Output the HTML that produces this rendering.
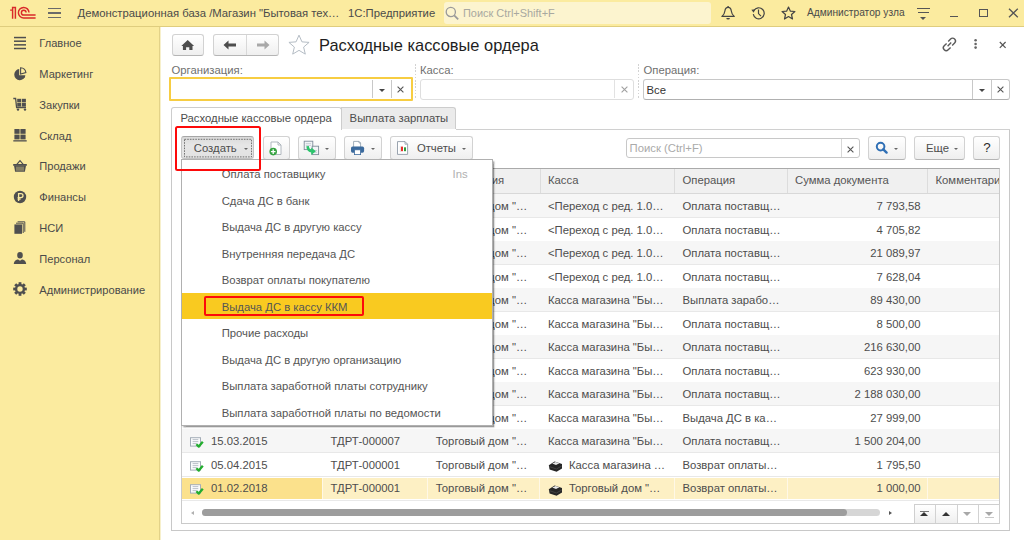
<!DOCTYPE html>
<html><head><meta charset="utf-8"><style>
*{margin:0;padding:0;box-sizing:border-box}
html,body{width:1024px;height:540px;overflow:hidden;background:#fff;font-family:"Liberation Sans",sans-serif;font-size:11.3px;color:#4d4d4d}
.a{position:absolute}
.t{position:absolute;white-space:nowrap;line-height:14px;font-size:11.3px}
svg{position:absolute;overflow:visible}
.btn{position:absolute;border:1px solid #d2d2d2;border-bottom-color:#b5b5b5;border-radius:3px;background:linear-gradient(#ffffff,#efefef)}
.fld{position:absolute;border:1px solid #d8d8d8;border-radius:3px;background:#fff}
.vl{position:absolute;width:1px}
.hl{position:absolute;height:1px}
</style></head><body>
<div class="a" style="left:0px;top:0px;width:1024px;height:26px;background:#fbeb9f"></div>
<div class="a" style="left:0px;top:26px;width:1024px;height:1px;background:#dfcd7e"></div>
<div class="a" style="left:0px;top:27px;width:159px;height:513px;background:#fbeb9f"></div>
<div class="a" style="left:159px;top:27px;width:1px;height:513px;background:#e3d288"></div>
<div class="a" style="left:160px;top:27px;width:1px;height:513px;background:#f7f0cc"></div>
<div class="t" style="left:39.3px;top:35.95px;font-size:11.1px;color:#4a4a4a;">Главное</div>
<div class="t" style="left:39.3px;top:66.82px;font-size:11.1px;color:#4a4a4a;">Маркетинг</div>
<div class="t" style="left:39.3px;top:97.69px;font-size:11.1px;color:#4a4a4a;">Закупки</div>
<div class="t" style="left:39.3px;top:128.56px;font-size:11.1px;color:#4a4a4a;">Склад</div>
<div class="t" style="left:39.3px;top:159.43px;font-size:11.1px;color:#4a4a4a;">Продажи</div>
<div class="t" style="left:39.3px;top:190.30px;font-size:11.1px;color:#4a4a4a;">Финансы</div>
<div class="t" style="left:39.3px;top:221.17px;font-size:11.1px;color:#4a4a4a;">НСИ</div>
<div class="t" style="left:39.3px;top:252.04px;font-size:11.1px;color:#4a4a4a;">Персонал</div>
<div class="t" style="left:39.3px;top:282.91px;font-size:11.1px;color:#4a4a4a;">Администрирование</div>
<svg style="left:13px;top:35.75px" width="14" height="14" viewBox="0 0 14 14"><rect x="1" y="0.8" width="12" height="1.5" fill="#4f4f4f"/><rect x="1" y="4.45" width="12" height="1.5" fill="#4f4f4f"/><rect x="1" y="8.1" width="12" height="1.5" fill="#4f4f4f"/><rect x="1" y="11.75" width="12" height="1.5" fill="#4f4f4f"/></svg>
<svg style="left:13px;top:66.55px" width="14" height="14" viewBox="0 0 14 14"><path d="M6.2 2 A5.6 5.6 0 1 0 12.4 8.3 H6.2 Z" fill="#4f4f4f"/><path d="M7.6 0.8 A5.6 5.6 0 0 1 12.9 5.6 L7.6 7 Z" fill="none" stroke="#4f4f4f" stroke-width="1.1"/><path d="M7.5 9 L12.2 9.2 A5.4 5.4 0 0 1 10.6 11.6 Z" fill="#4f4f4f"/></svg>
<svg style="left:13px;top:97.35px" width="14" height="14" viewBox="0 0 14 14"><path d="M0.3 1.5 H2.6 L3.6 10.5 H13" fill="none" stroke="#4f4f4f" stroke-width="1.3"/><rect x="4.2" y="1.8" width="4" height="3.6" fill="#4f4f4f"/><rect x="8.9" y="1.8" width="4" height="3.6" fill="#4f4f4f"/><rect x="4.2" y="6" width="4" height="3.6" fill="#4f4f4f"/><rect x="8.9" y="6" width="4" height="3.6" fill="#4f4f4f"/><circle cx="5" cy="12.6" r="1.2" fill="#4f4f4f"/><circle cx="12" cy="12.6" r="1.2" fill="#4f4f4f"/></svg>
<svg style="left:13px;top:128.15px" width="14" height="14" viewBox="0 0 14 14"><rect x="1.4" y="1" width="5.2" height="4.8" fill="#4f4f4f"/><rect x="7.4" y="1" width="5.2" height="4.8" fill="#4f4f4f"/><rect x="1.4" y="6.6" width="5.2" height="4.8" fill="#4f4f4f"/><rect x="7.4" y="6.6" width="5.2" height="4.8" fill="#4f4f4f"/><rect x="0.3" y="12.2" width="13.4" height="1.3" fill="#4f4f4f"/></svg>
<svg style="left:13px;top:158.95px" width="14" height="14" viewBox="0 0 14 14"><path d="M3.6 5.6 L7 1.6 L10.4 5.6" fill="none" stroke="#4f4f4f" stroke-width="1.2"/><path d="M0.2 5 H13.8 V6.8 H0.2 Z" fill="#4f4f4f"/><path d="M1 6.6 H13 L11.9 12.8 H2.1 Z" fill="#4f4f4f"/><path d="M4 7.6 V11.8 M6 7.6 V11.8 M8 7.6 V11.8 M10 7.6 V11.8" stroke="#c8bc80" stroke-width="0.9"/></svg>
<svg style="left:13px;top:189.75px" width="14" height="14" viewBox="0 0 14 14"><circle cx="7" cy="7" r="6.2" fill="#4f4f4f"/><path d="M5.6 11 V3.6 H8 A2 2 0 0 1 8 7.6 H4.6 M4.6 9.2 H7.6" fill="none" stroke="#fbeb9f" stroke-width="1.3"/></svg>
<svg style="left:13px;top:220.55px" width="14" height="14" viewBox="0 0 14 14"><rect x="1.4" y="3.4" width="7.6" height="9.4" fill="#4f4f4f"/><path d="M10.2 12 V2.2 H3" fill="none" stroke="#4f4f4f" stroke-width="1"/><path d="M11.8 10.8 V0.8 H4.6" fill="none" stroke="#4f4f4f" stroke-width="1"/></svg>
<svg style="left:13px;top:251.35000000000002px" width="14" height="14" viewBox="0 0 14 14"><path d="M4.2 4.2 A2.8 3.2 0 1 1 9.8 4.2 A2.8 3.2 0 1 1 4.2 4.2 Z" fill="#4f4f4f"/><path d="M0.8 13 C1 9.6 3.2 8.6 5.2 8.4 L7 9.8 L8.8 8.4 C10.8 8.6 13 9.6 13.2 13 Z" fill="#4f4f4f"/></svg>
<svg style="left:13px;top:282.15px" width="14" height="14" viewBox="0 0 14 14"><rect x="5.6" y="0.2" width="2.8" height="3" fill="#4f4f4f" transform="rotate(0 7 7)"/><rect x="5.6" y="0.2" width="2.8" height="3" fill="#4f4f4f" transform="rotate(45 7 7)"/><rect x="5.6" y="0.2" width="2.8" height="3" fill="#4f4f4f" transform="rotate(90 7 7)"/><rect x="5.6" y="0.2" width="2.8" height="3" fill="#4f4f4f" transform="rotate(135 7 7)"/><rect x="5.6" y="0.2" width="2.8" height="3" fill="#4f4f4f" transform="rotate(180 7 7)"/><rect x="5.6" y="0.2" width="2.8" height="3" fill="#4f4f4f" transform="rotate(225 7 7)"/><rect x="5.6" y="0.2" width="2.8" height="3" fill="#4f4f4f" transform="rotate(270 7 7)"/><rect x="5.6" y="0.2" width="2.8" height="3" fill="#4f4f4f" transform="rotate(315 7 7)"/><circle cx="7" cy="7" r="3.9" fill="none" stroke="#4f4f4f" stroke-width="2.4"/></svg>
<svg style="left:0px;top:0px" width="40" height="24" viewBox="0 0 40 24"><g fill="none" stroke="#d92a2a" stroke-width="1.45">
<path d="M10.1 10.1 H12.6 M12.6 18.7 V7.4 H15.4 V18.7"/>
<path d="M29 12.6 A5.3 5.3 0 1 0 23.9 18 H35.6"/>
<path d="M26.1 12.6 A2.35 2.35 0 1 0 23.7 15 H35.6"/>
</g></svg>
<div class="a" style="left:48px;top:7.9px;width:13px;height:1.2px;background:#6a6a6a"></div>
<div class="a" style="left:48px;top:12.4px;width:13px;height:1.2px;background:#6a6a6a"></div>
<div class="a" style="left:48px;top:16.9px;width:13px;height:1.2px;background:#6a6a6a"></div>
<div class="t" style="left:77.5px;top:6.08px;font-size:11.3px;color:#4a4a4a;">Демонстрационная база /Магазин "Бытовая тех…</div>
<div class="t" style="left:348px;top:6.08px;font-size:11.3px;color:#4a4a4a;">1С:Предприятие</div>
<div class="a" style="left:444px;top:2px;width:267px;height:21.5px;background:#fcf4cf;border-radius:3px"></div>
<svg style="left:445px;top:6px" width="15" height="15" viewBox="0 0 15 15"><circle cx="5.8" cy="6" r="4.6" fill="none" stroke="#9a9a9a" stroke-width="1.3"/><path d="M9.2 9.4 L13.2 13.4" stroke="#9a9a9a" stroke-width="1.8"/></svg>
<div class="t" style="left:463px;top:6.21px;font-size:10.95px;color:#a8a8a0;">Поиск Ctrl+Shift+F</div>
<svg style="left:721px;top:5px" width="15" height="16" viewBox="0 0 15 16"><path d="M0.9 11.4 C2.8 10 3.6 8.6 3.9 6 C4.2 3.6 5.2 2.4 7.1 2.4 C9 2.4 10 3.6 10.3 6 C10.6 8.6 11.4 10 13.3 11.4 Z" fill="none" stroke="#444" stroke-width="1.2" stroke-linejoin="round"/><circle cx="7.1" cy="1.9" r="0.9" fill="#444"/><path d="M5.3 13 A1.8 1.6 0 0 0 8.9 13 Z" fill="#444"/></svg>
<svg style="left:750px;top:5px" width="17" height="16" viewBox="0 0 17 16"><path d="M3.94 5.5 A5.5 5.5 0 1 1 3.28 9.2" fill="none" stroke="#444" stroke-width="1.2"/><path d="M1.4 4.8 L5.4 4.2 L3.6 7.8 Z" fill="#444"/><path d="M8.5 4.4 V8.6 L11 11.2" fill="none" stroke="#444" stroke-width="1.2"/></svg>
<svg style="left:781px;top:6px" width="15" height="14" viewBox="0 0 15 14"><path d="M7.5 1 L9.4 5.2 L13.9 5.5 L10.5 8.5 L11.5 13 L7.5 10.6 L3.5 13 L4.5 8.5 L1.1 5.5 L5.6 5.2 Z" fill="none" stroke="#444" stroke-width="1.2" stroke-linejoin="round"/></svg>
<div class="t" style="left:807px;top:5.97px;font-size:10.2px;color:#4a4a4a;">Администратор узла</div>
<div class="a" style="left:917px;top:7.8px;width:12.5px;height:1.3px;background:#555"></div>
<div class="a" style="left:918px;top:11.8px;width:10.5px;height:1.3px;background:#555"></div>
<div class="a" style="left:920.0px;top:17.3px;width:0;height:0;border-left:3.0px solid transparent;border-right:3.0px solid transparent;border-top:3px solid #555"></div>
<div class="a" style="left:949.5px;top:15.6px;width:8px;height:1.3px;background:#555"></div>
<div class="a" style="left:979px;top:9.3px;width:9px;height:8px;border:1.3px solid #555"></div>
<svg style="left:1008px;top:8px" width="11" height="10" viewBox="0 0 11 10"><path d="M1 0.7 L9.8 9.3 M9.8 0.7 L1 9.3" stroke="#555" stroke-width="1.3"/></svg>
<div class="btn" style="left:171.5px;top:34px;width:32.5px;height:22px"></div>
<svg style="left:180px;top:37px" width="16" height="14" viewBox="0 0 16 14"><path d="M7.7 2.9 L14.1 9 H12.5 V13.1 H9.3 V10.2 H6.1 V13.1 H2.9 V9 H1.3 Z" fill="#4d4d4d"/></svg>
<div class="btn" style="left:213px;top:34px;width:66px;height:22px"></div>
<div class="a" style="left:246px;top:35px;width:1px;height:20px;background:#d8d8d8"></div>
<svg style="left:222px;top:39px" width="16" height="12" viewBox="0 0 16 12"><path d="M1.5 6 L6.5 1.5 V4.6 H14 V7.4 H6.5 V10.5 Z" fill="#4d4d4d"/></svg>
<svg style="left:255px;top:39px" width="16" height="12" viewBox="0 0 16 12"><path d="M14.5 6 L9.5 1.5 V4.6 H2 V7.4 H9.5 V10.5 Z" fill="#a8a8a8"/></svg>
<svg style="left:288px;top:35px" width="22" height="21" viewBox="0 0 22 21"><path transform="translate(11 10) scale(1.05) translate(-11 -10.6)" d="M11 1.2 L13.8 7.6 L20.6 8.1 L15.4 12.6 L17 19.3 L11 15.7 L5 19.3 L6.6 12.6 L1.4 8.1 L8.2 7.6 Z" fill="none" stroke="#b4bcc4" stroke-width="0.95"/></svg>
<div class="t" style="left:319px;top:37.92px;font-size:16.4px;color:#1e1e1e;">Расходные кассовые ордера</div>
<svg style="left:941px;top:36px" width="17" height="17" viewBox="0 0 17 17"><g fill="none" stroke="#5a5a5a" stroke-width="1.4"><path d="M7.2 5.4 L9.6 3 A2.6 2.6 0 0 1 13.6 7 L11.2 9.4"/><path d="M9.6 11.4 L7.2 13.8 A2.6 2.6 0 0 1 3.2 9.8 L5.6 7.4"/><path d="M6.6 10.2 L10.2 6.6"/></g></svg>
<svg style="left:970px;top:36px" width="12" height="16" viewBox="0 0 12 16"><circle cx="5.6" cy="4.2" r="1.3" fill="#666"/><circle cx="5.6" cy="8" r="1.3" fill="#666"/><circle cx="5.6" cy="11.6" r="1.3" fill="#666"/></svg>
<svg style="left:999px;top:40.5px" width="8" height="8" viewBox="0 0 8 8"><path d="M0.8 1 L6.6 6.8 M6.6 1 L0.8 6.8" stroke="#555" stroke-width="1.2"/></svg>
<div class="t" style="left:171.5px;top:63.08px;font-size:11.3px;color:#707070;">Организация:</div>
<div class="a" style="left:169px;top:77px;width:243.5px;height:24.2px;border:2px solid #f7cd42;border-radius:1px;background:#fff"></div>
<div class="a" style="left:372px;top:80px;width:1px;height:18px;background:#c8c8c8"></div>
<div class="a" style="left:391px;top:80px;width:1px;height:18px;background:#c8c8c8"></div>
<div class="a" style="left:379.0px;top:89px;width:0;height:0;border-left:3.0px solid transparent;border-right:3.0px solid transparent;border-top:3.2px solid #444"></div>
<svg style="left:397px;top:86px" width="7" height="7" viewBox="0 0 7 7"><path d="M0.6 0.6 L6.4 6.4 M6.4 0.6 L0.6 6.4" stroke="#555" stroke-width="1.1"/></svg>
<div class="a" style="left:415px;top:64px;width:1px;height:35px;background:repeating-linear-gradient(#d2d2d2 0 1.5px,transparent 1.5px 3.2px)"></div>
<div class="a" style="left:638px;top:64px;width:1px;height:35px;background:repeating-linear-gradient(#d2d2d2 0 1.5px,transparent 1.5px 3.2px)"></div>
<div class="t" style="left:420px;top:63.08px;font-size:11.3px;color:#707070;">Касса:</div>
<div class="fld" style="left:420px;top:79px;width:214px;height:20.5px;border-color:#dedede"></div>
<div class="a" style="left:614px;top:80px;width:1px;height:18px;background:#e2e2e2"></div>
<svg style="left:621px;top:86px" width="7" height="7" viewBox="0 0 7 7"><path d="M0.6 0.6 L6.4 6.4 M6.4 0.6 L0.6 6.4" stroke="#a0a0a0" stroke-width="1.1"/></svg>
<div class="t" style="left:643.5px;top:63.08px;font-size:11.3px;color:#707070;">Операция:</div>
<div class="fld" style="left:643px;top:79px;width:367px;height:20.5px;border-color:#c8c8c8;border-bottom-color:#b0b0b0"></div>
<div class="t" style="left:646.5px;top:82.58px;font-size:11.3px;color:#333;">Все</div>
<div class="a" style="left:972px;top:80px;width:1px;height:18.5px;background:#c8c8c8"></div>
<div class="a" style="left:991px;top:80px;width:1px;height:18.5px;background:#c8c8c8"></div>
<div class="a" style="left:978.5px;top:89px;width:0;height:0;border-left:3.0px solid transparent;border-right:3.0px solid transparent;border-top:3px solid #444"></div>
<svg style="left:997px;top:86px" width="7" height="7" viewBox="0 0 7 7"><path d="M0.6 0.6 L6.4 6.4 M6.4 0.6 L0.6 6.4" stroke="#555" stroke-width="1.1"/></svg>
<div class="a" style="left:171px;top:129px;width:839px;height:402px;border:1px solid #c8c8c8;border-top:none;background:#fff"></div>
<div class="a" style="left:456px;top:129px;width:554px;height:1px;background:#d0d0d0"></div>
<div class="a" style="left:171px;top:107px;width:171px;height:23px;border:1px solid #cdcdcd;border-bottom:none;border-radius:3px 3px 0 0;background:#fff"></div>
<div class="t" style="left:180.4px;top:111.08px;font-size:11.3px;color:#4d4d4d;">Расходные кассовые ордера</div>
<div class="a" style="left:341px;top:107px;width:115px;height:22px;border:1px solid #cdcdcd;border-bottom:none;border-radius:0 3px 0 0;background:#ebebeb"></div>
<div class="t" style="left:349.6px;top:111.08px;font-size:11.3px;color:#4d4d4d;">Выплата зарплаты</div>
<div class="a" style="left:181.3px;top:136px;width:73.2px;height:23.2px;border:1px solid #c4c4c4;border-top-color:#a6a6a6;border-radius:3px;background:linear-gradient(#dadada,#e6e6e6 40%,#e2e2e2)"></div>
<svg style="left:183px;top:138px" width="70" height="20" viewBox="0 0 70 20"><rect x="1.5" y="1.3" width="67" height="17.6" fill="none" stroke="#666" stroke-width="0.9" stroke-dasharray="1.6 1.1"/></svg>
<div class="t" style="left:193.8px;top:140.58px;font-size:11.3px;color:#4d4d4d;">Создать</div>
<div class="a" style="left:243.5px;top:147.5px;width:0;height:0;border-left:2.5px solid transparent;border-right:2.5px solid transparent;border-top:2.5px solid #666"></div>
<div class="btn" style="left:263px;top:136px;width:26.5px;height:23.5px"></div>
<svg style="left:268px;top:141px" width="16" height="15" viewBox="0 0 16 15"><path d="M3 1 H10 L13 4 V13.5 H3 Z" fill="#fff" stroke="#a8b0b8" stroke-width="0.9"/><path d="M10 1 V4 H13" fill="none" stroke="#a8b0b8" stroke-width="0.9"/><circle cx="5.2" cy="10.6" r="3.8" fill="#36a341"/><path d="M5.2 8.3 V12.9 M2.9 10.6 H7.5" stroke="#fff" stroke-width="1.3"/></svg>
<div class="btn" style="left:298px;top:136px;width:37.5px;height:23.5px"></div>
<svg style="left:302px;top:140px" width="18" height="17" viewBox="0 0 18 17"><rect x="2.2" y="1.2" width="8.6" height="8.4" fill="#f2f4f7" stroke="#7f8c9a" stroke-width="0.9"/><path d="M3.8 3.6 H9 M3.8 5.4 H9" stroke="#b8c2cc" stroke-width="0.7"/><rect x="10.2" y="6.2" width="6.4" height="8.4" fill="#f2f4f7" stroke="#7f8c9a" stroke-width="0.9"/><path d="M12 10.5 H15 M12 12.3 H15" stroke="#b8c2cc" stroke-width="0.7"/><path d="M5.6 6.2 C5.8 9.4 6.9 11 9.8 11.3" fill="none" stroke="#2cc46c" stroke-width="2.6"/><path d="M9.2 7.6 L13.9 11.3 L9.2 15 Z" fill="#2cc46c"/></svg>
<div class="a" style="left:325.0px;top:147.5px;width:0;height:0;border-left:2.5px solid transparent;border-right:2.5px solid transparent;border-top:2.5px solid #666"></div>
<div class="btn" style="left:344px;top:136px;width:37.5px;height:23.5px"></div>
<svg style="left:349px;top:140px" width="17" height="16" viewBox="0 0 17 16"><path d="M4.6 1.4 H10 L11.6 3 V7.4 H4.6 Z" fill="#fff" stroke="#8a9aaa" stroke-width="0.8"/><path d="M10 1.4 V3 H11.6" fill="none" stroke="#8a9aaa" stroke-width="0.7"/><rect x="2" y="6.6" width="13.1" height="6.1" rx="1.6" fill="#3b6a9d"/><rect x="5.4" y="9.8" width="6.2" height="4.8" fill="#fff" stroke="#3b6a9d" stroke-width="0.8"/></svg>
<div class="a" style="left:370.5px;top:147.5px;width:0;height:0;border-left:2.5px solid transparent;border-right:2.5px solid transparent;border-top:2.5px solid #666"></div>
<div class="btn" style="left:389.5px;top:136px;width:83px;height:23.5px"></div>
<svg style="left:396px;top:141px" width="13" height="15" viewBox="0 0 13 15"><path d="M1.5 0.6 H9 L11.6 3.2 V13.4 H1.5 Z" fill="#fff" stroke="#8f9aa6" stroke-width="0.9"/><path d="M9 0.6 V3.2 H11.6" fill="none" stroke="#8f9aa6" stroke-width="0.8"/><path d="M4.3 5.2 V11" stroke="#c8c8c8" stroke-width="0.6"/><rect x="5" y="5.6" width="2" height="4.6" fill="#e8302a"/><rect x="8" y="6.3" width="2" height="3.9" fill="#2e9d3a"/></svg>
<div class="t" style="left:416.9px;top:140.58px;font-size:11.3px;color:#4d4d4d;">Отчеты</div>
<div class="a" style="left:461.5px;top:147.5px;width:0;height:0;border-left:2.5px solid transparent;border-right:2.5px solid transparent;border-top:2.5px solid #666"></div>
<div class="fld" style="left:626px;top:138px;width:233.5px;height:19.8px;border-color:#c8c8c8"></div>
<div class="t" style="left:629.6px;top:141.48px;font-size:11.3px;color:#aaaaaa;">Поиск (Ctrl+F)</div>
<div class="a" style="left:841px;top:139px;width:1px;height:18px;background:#d8d8d8"></div>
<svg style="left:846.5px;top:145.5px" width="7" height="7" viewBox="0 0 7 7"><path d="M0.6 0.6 L6.4 6.4 M6.4 0.6 L0.6 6.4" stroke="#555" stroke-width="1.1"/></svg>
<div class="btn" style="left:868px;top:136px;width:38px;height:23.5px"></div>
<svg style="left:874.5px;top:141px" width="14" height="14" viewBox="0 0 14 14"><circle cx="5.6" cy="5.6" r="3.8" fill="none" stroke="#2f6fb5" stroke-width="2"/><path d="M8.3 8.3 L11.6 11.6" stroke="#2f6fb5" stroke-width="2.4" stroke-linecap="round"/></svg>
<div class="a" style="left:894.0px;top:147.5px;width:0;height:0;border-left:2.5px solid transparent;border-right:2.5px solid transparent;border-top:2.5px solid #666"></div>
<div class="btn" style="left:914px;top:136px;width:51px;height:23.5px"></div>
<div class="t" style="left:926px;top:140.58px;font-size:11.3px;color:#4d4d4d;">Еще</div>
<div class="a" style="left:954.0px;top:147.5px;width:0;height:0;border-left:2.5px solid transparent;border-right:2.5px solid transparent;border-top:2.5px solid #666"></div>
<div class="btn" style="left:973px;top:136px;width:27px;height:23.5px"></div>
<div class="t" style="left:983.3px;top:140.76px;font-size:13.4px;color:#2a2a2a;">?</div>
<div class="a" style="left:181px;top:168px;width:819px;height:356px;border:1px solid #cacaca;border-top-color:#aaaaaa;background:#fff"></div>
<div class="a" style="left:182px;top:169px;width:817px;height:25px;background:#f0f0f0;border-bottom:1px solid #d8d8d8"></div>
<div class="a" style="left:321px;top:169px;width:1px;height:24px;background:#dcdcdc"></div>
<div class="a" style="left:427px;top:169px;width:1px;height:24px;background:#dcdcdc"></div>
<div class="a" style="left:540px;top:169px;width:1px;height:24px;background:#dcdcdc"></div>
<div class="a" style="left:674px;top:169px;width:1px;height:24px;background:#dcdcdc"></div>
<div class="a" style="left:787px;top:169px;width:1px;height:24px;background:#dcdcdc"></div>
<div class="a" style="left:927px;top:169px;width:1px;height:24px;background:#dcdcdc"></div>
<div class="t" style="left:211px;top:173.38px;font-size:11.3px;color:#555;">Дата</div>
<div class="t" style="left:330.5px;top:173.38px;font-size:11.3px;color:#555;">Номер</div>
<div class="t" style="left:436px;top:173.38px;font-size:11.3px;color:#555;">Организация</div>
<div class="t" style="left:548px;top:173.38px;font-size:11.3px;color:#555;">Касса</div>
<div class="t" style="left:682.5px;top:173.38px;font-size:11.3px;color:#555;">Операция</div>
<div class="t" style="left:795px;top:173.38px;font-size:11.3px;color:#555;">Сумма документа</div>
<div class="t" style="left:935.5px;top:173.38px;font-size:11.3px;color:#555;">Комментарий</div>
<div class="a" style="left:1000px;top:168px;width:9px;height:26px;background:#fff"></div>
<div class="a" style="left:999px;top:169px;width:1px;height:25px;background:#cacaca"></div>
<div class="a" style="left:182px;top:194.0px;width:817px;height:23.52px;background:#f6f6f6"></div>
<div class="a" style="left:182px;top:217.22px;width:817px;height:1px;background:#e8e8e8"></div>
<div class="t" style="left:435.8px;top:198.98px;font-size:11.3px;color:#4d4d4d;">Торговый дом "…</div>
<div class="t" style="left:548px;top:198.98px;font-size:11.3px;color:#4d4d4d;">&lt;Переход с ред. 1.0…</div>
<div class="t" style="left:682.5px;top:198.98px;font-size:11.3px;color:#4d4d4d;">Оплата поставщ…</div>
<div class="t" style="right:103.5px;top:198.98px;color:#4d4d4d">7 793,58</div>
<div class="a" style="left:182px;top:217.52px;width:817px;height:23.52px;background:#ffffff"></div>
<div class="a" style="left:182px;top:240.74px;width:817px;height:1px;background:#e8e8e8"></div>
<div class="t" style="left:435.8px;top:222.50px;font-size:11.3px;color:#4d4d4d;">Торговый дом "…</div>
<div class="t" style="left:548px;top:222.50px;font-size:11.3px;color:#4d4d4d;">&lt;Переход с ред. 1.0…</div>
<div class="t" style="left:682.5px;top:222.50px;font-size:11.3px;color:#4d4d4d;">Оплата поставщ…</div>
<div class="t" style="right:103.5px;top:222.50px;color:#4d4d4d">4 705,82</div>
<div class="a" style="left:182px;top:241.04px;width:817px;height:23.52px;background:#f6f6f6"></div>
<div class="a" style="left:182px;top:264.26px;width:817px;height:1px;background:#e8e8e8"></div>
<div class="t" style="left:435.8px;top:246.02px;font-size:11.3px;color:#4d4d4d;">Торговый дом "…</div>
<div class="t" style="left:548px;top:246.02px;font-size:11.3px;color:#4d4d4d;">&lt;Переход с ред. 1.0…</div>
<div class="t" style="left:682.5px;top:246.02px;font-size:11.3px;color:#4d4d4d;">Оплата поставщ…</div>
<div class="t" style="right:103.5px;top:246.02px;color:#4d4d4d">21 089,97</div>
<div class="a" style="left:182px;top:264.56px;width:817px;height:23.52px;background:#ffffff"></div>
<div class="a" style="left:182px;top:287.78px;width:817px;height:1px;background:#e8e8e8"></div>
<div class="t" style="left:435.8px;top:269.54px;font-size:11.3px;color:#4d4d4d;">Торговый дом "…</div>
<div class="t" style="left:548px;top:269.54px;font-size:11.3px;color:#4d4d4d;">&lt;Переход с ред. 1.0…</div>
<div class="t" style="left:682.5px;top:269.54px;font-size:11.3px;color:#4d4d4d;">Оплата поставщ…</div>
<div class="t" style="right:103.5px;top:269.54px;color:#4d4d4d">7 628,04</div>
<div class="a" style="left:182px;top:288.08px;width:817px;height:23.52px;background:#f6f6f6"></div>
<div class="a" style="left:182px;top:311.29999999999995px;width:817px;height:1px;background:#e8e8e8"></div>
<div class="t" style="left:435.8px;top:293.06px;font-size:11.3px;color:#4d4d4d;">Торговый дом "…</div>
<div class="t" style="left:548px;top:293.06px;font-size:11.3px;color:#4d4d4d;">Касса магазина "Бы…</div>
<div class="t" style="left:682.5px;top:293.06px;font-size:11.3px;color:#4d4d4d;">Выплата зарабо…</div>
<div class="t" style="right:103.5px;top:293.06px;color:#4d4d4d">89 430,00</div>
<div class="a" style="left:182px;top:311.6px;width:817px;height:23.52px;background:#ffffff"></div>
<div class="a" style="left:182px;top:334.82px;width:817px;height:1px;background:#e8e8e8"></div>
<div class="t" style="left:435.8px;top:316.58px;font-size:11.3px;color:#4d4d4d;">Торговый дом "…</div>
<div class="t" style="left:548px;top:316.58px;font-size:11.3px;color:#4d4d4d;">Касса магазина "Бы…</div>
<div class="t" style="left:682.5px;top:316.58px;font-size:11.3px;color:#4d4d4d;">Оплата поставщ…</div>
<div class="t" style="right:103.5px;top:316.58px;color:#4d4d4d">8 500,00</div>
<div class="a" style="left:182px;top:335.12px;width:817px;height:23.52px;background:#f6f6f6"></div>
<div class="a" style="left:182px;top:358.34px;width:817px;height:1px;background:#e8e8e8"></div>
<div class="t" style="left:435.8px;top:340.10px;font-size:11.3px;color:#4d4d4d;">Торговый дом "…</div>
<div class="t" style="left:548px;top:340.10px;font-size:11.3px;color:#4d4d4d;">Касса магазина "Бы…</div>
<div class="t" style="left:682.5px;top:340.10px;font-size:11.3px;color:#4d4d4d;">Оплата поставщ…</div>
<div class="t" style="right:103.5px;top:340.10px;color:#4d4d4d">216 630,00</div>
<div class="a" style="left:182px;top:358.64px;width:817px;height:23.52px;background:#ffffff"></div>
<div class="a" style="left:182px;top:381.85999999999996px;width:817px;height:1px;background:#e8e8e8"></div>
<div class="t" style="left:435.8px;top:363.62px;font-size:11.3px;color:#4d4d4d;">Торговый дом "…</div>
<div class="t" style="left:548px;top:363.62px;font-size:11.3px;color:#4d4d4d;">Касса магазина "Бы…</div>
<div class="t" style="left:682.5px;top:363.62px;font-size:11.3px;color:#4d4d4d;">Оплата поставщ…</div>
<div class="t" style="right:103.5px;top:363.62px;color:#4d4d4d">623 930,00</div>
<div class="a" style="left:182px;top:382.15999999999997px;width:817px;height:23.52px;background:#f6f6f6"></div>
<div class="a" style="left:182px;top:405.37999999999994px;width:817px;height:1px;background:#e8e8e8"></div>
<div class="t" style="left:435.8px;top:387.14px;font-size:11.3px;color:#4d4d4d;">Торговый дом "…</div>
<div class="t" style="left:548px;top:387.14px;font-size:11.3px;color:#4d4d4d;">Касса магазина "Бы…</div>
<div class="t" style="left:682.5px;top:387.14px;font-size:11.3px;color:#4d4d4d;">Оплата поставщ…</div>
<div class="t" style="right:103.5px;top:387.14px;color:#4d4d4d">2 188 030,00</div>
<div class="a" style="left:182px;top:405.68px;width:817px;height:23.52px;background:#ffffff"></div>
<div class="a" style="left:182px;top:428.9px;width:817px;height:1px;background:#e8e8e8"></div>
<div class="t" style="left:435.8px;top:410.66px;font-size:11.3px;color:#4d4d4d;">Торговый дом "…</div>
<div class="t" style="left:548px;top:410.66px;font-size:11.3px;color:#4d4d4d;">Касса магазина "Бы…</div>
<div class="t" style="left:682.5px;top:410.66px;font-size:11.3px;color:#4d4d4d;">Выдача ДС в ка…</div>
<div class="t" style="right:103.5px;top:410.66px;color:#4d4d4d">27 999,00</div>
<div class="a" style="left:182px;top:429.2px;width:817px;height:23.52px;background:#f6f6f6"></div>
<div class="a" style="left:182px;top:452.41999999999996px;width:817px;height:1px;background:#e8e8e8"></div>
<svg style="left:189px;top:436.3px" width="16" height="13" viewBox="0 0 16 13"><rect x="1.5" y="1.7" width="10" height="8.4" fill="#fafbfc" stroke="#a4adb7" stroke-width="1"/><path d="M3.6 3.6 H9.3 M3.6 5.6 H9.3 M3.6 7.6 H8" stroke="#a9b2bc" stroke-width="0.8"/><path d="M7.4 8.2 L9.8 10.6 L13.8 5.8" fill="none" stroke="#22ad2e" stroke-width="2.3" stroke-linejoin="round"/></svg>
<div class="t" style="left:211px;top:434.18px;font-size:11.3px;color:#4d4d4d;">15.03.2015</div>
<div class="t" style="left:330.5px;top:434.18px;font-size:11.3px;color:#4d4d4d;">ТДРТ-000007</div>
<div class="t" style="left:435.8px;top:434.18px;font-size:11.3px;color:#4d4d4d;">Торговый дом "…</div>
<div class="t" style="left:548px;top:434.18px;font-size:11.3px;color:#4d4d4d;">Касса магазина "Бы…</div>
<div class="t" style="left:682.5px;top:434.18px;font-size:11.3px;color:#4d4d4d;">Оплата поставщ…</div>
<div class="t" style="right:103.5px;top:434.18px;color:#4d4d4d">1 500 204,00</div>
<div class="a" style="left:182px;top:452.71999999999997px;width:817px;height:23.52px;background:#ffffff"></div>
<div class="a" style="left:182px;top:475.93999999999994px;width:817px;height:1px;background:#e8e8e8"></div>
<svg style="left:189px;top:459.82px" width="16" height="13" viewBox="0 0 16 13"><rect x="1.5" y="1.7" width="10" height="8.4" fill="#fafbfc" stroke="#a4adb7" stroke-width="1"/><path d="M3.6 3.6 H9.3 M3.6 5.6 H9.3 M3.6 7.6 H8" stroke="#a9b2bc" stroke-width="0.8"/><path d="M7.4 8.2 L9.8 10.6 L13.8 5.8" fill="none" stroke="#22ad2e" stroke-width="2.3" stroke-linejoin="round"/></svg>
<div class="t" style="left:211px;top:457.70px;font-size:11.3px;color:#4d4d4d;">05.04.2015</div>
<div class="t" style="left:330.5px;top:457.70px;font-size:11.3px;color:#4d4d4d;">ТДРТ-000001</div>
<div class="t" style="left:435.8px;top:457.70px;font-size:11.3px;color:#4d4d4d;">Торговый дом "…</div>
<svg style="left:547.5px;top:460.32px" width="16" height="13" viewBox="0 0 16 13"><path d="M0.8 5.2 L6.6 1.6 L14 4 L14 8.6 L8.6 11.8 L1.6 9.6 Z" fill="#262626"/><path d="M4.2 3.6 L7.6 1.9 L11.4 3.2 L8 5 Z" fill="#e8e8e8"/><path d="M1.4 6.6 L8.4 9 L13.8 6" fill="none" stroke="#555" stroke-width="0.6"/></svg>
<div class="t" style="left:569px;top:457.70px;font-size:11.3px;color:#4d4d4d;">Касса магазина …</div>
<div class="t" style="left:682.5px;top:457.70px;font-size:11.3px;color:#4d4d4d;">Возврат оплаты…</div>
<div class="t" style="right:103.5px;top:457.70px;color:#4d4d4d">1 795,50</div>
<div class="a" style="left:182px;top:477px;width:817px;height:23px;background:#fff"></div>
<div class="a" style="left:182px;top:478px;width:817px;height:21px;background:#fdf0c4"></div>
<div class="a" style="left:182px;top:478px;width:140px;height:21px;background:#fbe18c"></div>
<div class="a" style="left:182px;top:500px;width:817px;height:1px;background:#e9e9e9"></div>
<div class="a" style="left:322px;top:478px;width:1px;height:21px;background:#fff8e6"></div>
<div class="a" style="left:427px;top:478px;width:1px;height:21px;background:#fff8e6"></div>
<div class="a" style="left:539px;top:478px;width:1px;height:21px;background:#fff8e6"></div>
<div class="a" style="left:674px;top:478px;width:1px;height:21px;background:#fff8e6"></div>
<div class="a" style="left:787px;top:478px;width:1px;height:21px;background:#fff8e6"></div>
<div class="a" style="left:927px;top:478px;width:1px;height:21px;background:#fff8e6"></div>
<svg style="left:189px;top:483.34000000000003px" width="16" height="13" viewBox="0 0 16 13"><rect x="1.5" y="1.7" width="10" height="8.4" fill="#fafbfc" stroke="#a4adb7" stroke-width="1"/><path d="M3.6 3.6 H9.3 M3.6 5.6 H9.3 M3.6 7.6 H8" stroke="#a9b2bc" stroke-width="0.8"/><path d="M7.4 8.2 L9.8 10.6 L13.8 5.8" fill="none" stroke="#22ad2e" stroke-width="2.3" stroke-linejoin="round"/></svg>
<div class="t" style="left:211px;top:481.22px;font-size:11.3px;color:#4d4d4d;">01.02.2018</div>
<div class="t" style="left:330.5px;top:481.22px;font-size:11.3px;color:#4d4d4d;">ТДРТ-000001</div>
<div class="t" style="left:435.8px;top:481.22px;font-size:11.3px;color:#4d4d4d;">Торговый дом "…</div>
<svg style="left:547.5px;top:483.84000000000003px" width="16" height="13" viewBox="0 0 16 13"><path d="M0.8 5.2 L6.6 1.6 L14 4 L14 8.6 L8.6 11.8 L1.6 9.6 Z" fill="#262626"/><path d="M4.2 3.6 L7.6 1.9 L11.4 3.2 L8 5 Z" fill="#e8e8e8"/><path d="M1.4 6.6 L8.4 9 L13.8 6" fill="none" stroke="#555" stroke-width="0.6"/></svg>
<div class="t" style="left:569px;top:481.22px;font-size:11.3px;color:#4d4d4d;">Торговый дом "…</div>
<div class="t" style="left:682.5px;top:481.22px;font-size:11.3px;color:#4d4d4d;">Возврат оплаты…</div>
<div class="t" style="right:103.5px;top:481.22px;color:#4d4d4d">1 000,00</div>
<div class="a" style="left:191px;top:511px;width:0px;height:0px;border-top:2.5px solid transparent;border-bottom:2.5px solid transparent;border-right:3px solid #b0b0b0"></div>
<div class="a" style="left:202px;top:509px;width:677.5px;height:7px;background:#d6d6d6;border-radius:3.5px"></div>
<div class="a" style="left:202px;top:509px;width:645px;height:7px;background:#9d9d9d;border-radius:3.5px"></div>
<div class="a" style="left:889px;top:511px;width:0px;height:0px;border-top:2.5px solid transparent;border-bottom:2.5px solid transparent;border-left:3px solid #555"></div>
<div class="a" style="left:914px;top:504px;width:86px;height:20px;border:1px solid #cfcfcf;background:#fff"></div>
<div class="a" style="left:915px;top:505px;width:42.3px;height:18px;background:linear-gradient(#fff,#efefef)"></div>
<div class="a" style="left:935px;top:505px;width:1px;height:18px;background:#d2d2d2"></div>
<div class="a" style="left:957px;top:505px;width:1px;height:18px;background:#d2d2d2"></div>
<div class="a" style="left:978px;top:505px;width:1px;height:18px;background:#d2d2d2"></div>
<div class="a" style="left:920.3px;top:511.2px;width:9px;height:1.1px;background:#777"></div>
<div class="a" style="left:920.0px;top:512px;width:0;height:0;border-left:4.7px solid transparent;border-right:4.7px solid transparent;border-bottom:4.6px solid #333"></div>
<div class="a" style="left:941.5999999999999px;top:512px;width:0;height:0;border-left:4.7px solid transparent;border-right:4.7px solid transparent;border-bottom:4.8px solid #333"></div>
<div class="a" style="left:963.0px;top:512.2px;width:0;height:0;border-left:4.7px solid transparent;border-right:4.7px solid transparent;border-top:4.8px solid #a8a8a8"></div>
<div class="a" style="left:984.5px;top:512px;width:0;height:0;border-left:4.7px solid transparent;border-right:4.7px solid transparent;border-top:4.6px solid #a8a8a8"></div>
<div class="a" style="left:984.7px;top:516.6px;width:9px;height:1.1px;background:#c8c8c8"></div>
<div class="a" style="left:181px;top:159px;width:312px;height:267px;background:#fff;border:1px solid #b0b0b0;box-shadow:1.5px 1.5px 1.5px rgba(0,0,0,0.4)"></div>
<div class="t" style="left:221.7px;top:167.08px;font-size:11.3px;color:#555;">Оплата поставщику</div>
<div class="t" style="left:221.7px;top:193.58px;font-size:11.3px;color:#555;">Сдача ДС в банк</div>
<div class="t" style="left:221.7px;top:220.08px;font-size:11.3px;color:#555;">Выдача ДС в другую кассу</div>
<div class="t" style="left:221.7px;top:246.58px;font-size:11.3px;color:#555;">Внутренняя передача ДС</div>
<div class="t" style="left:221.7px;top:273.08px;font-size:11.3px;color:#555;">Возврат оплаты покупателю</div>
<div class="a" style="left:182px;top:293px;width:310px;height:26px;background:#f9ca20"></div>
<div class="a" style="left:203.8px;top:296.2px;width:160.4px;height:19.6px;border:2.4px solid #fd0a0a;border-radius:2px"></div>
<div class="t" style="left:221.7px;top:299.58px;font-size:11.3px;color:#555;">Выдача ДС в кассу ККМ</div>
<div class="t" style="left:221.7px;top:326.08px;font-size:11.3px;color:#555;">Прочие расходы</div>
<div class="t" style="left:221.7px;top:352.58px;font-size:11.3px;color:#555;">Выдача ДС в другую организацию</div>
<div class="t" style="left:221.7px;top:379.08px;font-size:11.3px;color:#555;">Выплата заработной платы сотруднику</div>
<div class="t" style="left:221.7px;top:405.58px;font-size:11.3px;color:#555;">Выплата заработной платы по ведомости</div>
<div class="t" style="left:452.5px;top:167.08px;font-size:11.3px;color:#b0b0b0;">Ins</div>
<div class="a" style="left:175.1px;top:126.4px;width:86.1px;height:44.2px;border:2.8px solid #fd0a0a;border-radius:2.5px"></div>
</body></html>
